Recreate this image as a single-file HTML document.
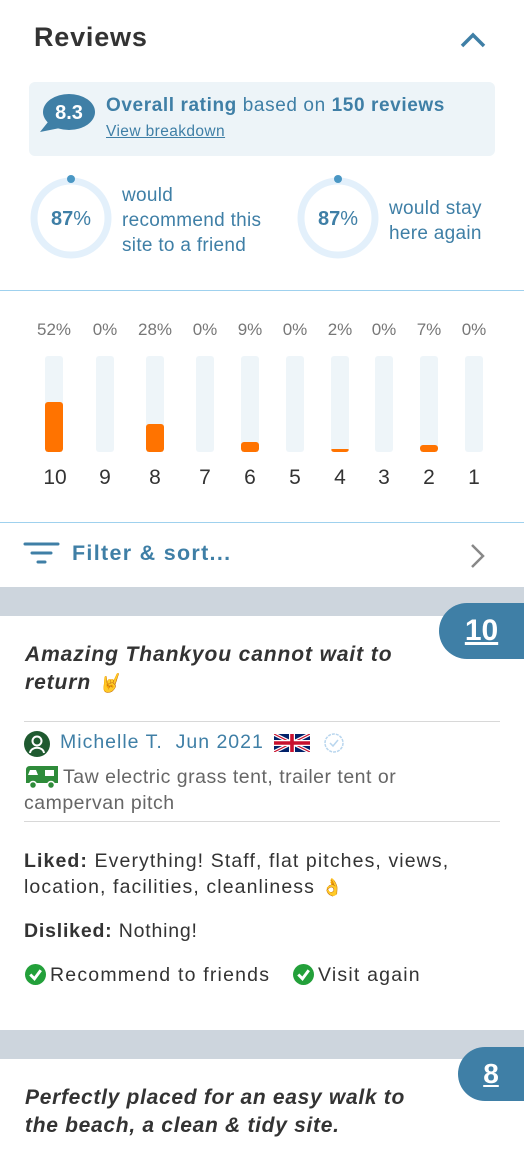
<!DOCTYPE html>
<html><head><meta charset="utf-8">
<style>
*{margin:0;padding:0;box-sizing:border-box}
body{width:524px;height:1163px;overflow:hidden;background:#fff;font-family:"Liberation Sans",sans-serif;position:relative;color:#333}
.a{position:absolute;white-space:nowrap}
.blue{color:#3f7fa6}
.track{position:absolute;top:356px;width:18px;height:96px;background:#eef5f9;border-radius:3px;overflow:hidden}
.fill{position:absolute;bottom:0;left:0;width:100%;background:#ff7300;border-radius:3px}
.pct{position:absolute;top:320px;width:50px;margin-left:-25px;text-align:center;font-size:17px;color:#777}
.num{position:absolute;top:466px;width:50px;margin-left:-25px;text-align:center;font-size:21px;color:#333}
.gray{position:absolute;left:0;width:524px;background:#cdd5dd}
.badge{position:absolute;right:0;background:#3f7fa6;color:#fff;font-weight:bold;border-radius:28px 0 0 28px;text-align:center;text-decoration:underline;font-size:30px}
.hr{position:absolute;left:24px;width:476px;height:1px;background:#d8d8d8}
</style></head><body>
<div class="a" style="left:34px;top:22px;font-size:27px;font-weight:bold;color:#333;letter-spacing:0.8px">Reviews</div>
<svg class="a" style="left:458px;top:30px" width="30" height="20" viewBox="0 0 30 20"><path d="M4 16 L15 5 L26 16" fill="none" stroke="#3f7fa6" stroke-width="3.5"/></svg>

<div class="a" style="left:29px;top:82px;width:466px;height:74px;background:#edf4f8;border-radius:6px"></div>
<svg class="a" style="left:38px;top:92px" width="58" height="42" viewBox="0 0 58 42"><ellipse cx="31" cy="20" rx="26" ry="18" fill="#3f7fa6"/><path d="M10 30 L2 40 L22 36 Z" fill="#3f7fa6"/><text x="31" y="27" text-anchor="middle" font-family="Liberation Sans" font-weight="bold" font-size="20" fill="#fff">8.3</text></svg>
<div class="a blue" style="left:106px;top:95px;font-size:19px;letter-spacing:0.6px"><b>Overall rating</b> based on <b>150 reviews</b></div>
<div class="a blue" style="left:106px;top:123px;font-size:15.5px;letter-spacing:0.4px;text-decoration:underline">View breakdown</div>

<svg class="a" style="left:29px;top:174px" width="84" height="86" viewBox="0 0 84 86"><circle cx="42" cy="44" r="37" fill="none" stroke="#e3f0fb" stroke-width="7"/><circle cx="42" cy="5" r="4" fill="#4a97c4"/><text x="42" y="51" text-anchor="middle" font-family="Liberation Sans" font-weight="bold" font-size="20" fill="#3f7fa6">87<tspan font-weight="normal">%</tspan></text></svg>
<div class="a blue" style="left:122px;top:183px;font-size:19px;line-height:25px;letter-spacing:0.3px">would<br>recommend this<br>site to a friend</div>
<svg class="a" style="left:296px;top:174px" width="84" height="86" viewBox="0 0 84 86"><circle cx="42" cy="44" r="37" fill="none" stroke="#e3f0fb" stroke-width="7"/><circle cx="42" cy="5" r="4" fill="#4a97c4"/><text x="42" y="51" text-anchor="middle" font-family="Liberation Sans" font-weight="bold" font-size="20" fill="#3f7fa6">87<tspan font-weight="normal">%</tspan></text></svg>
<div class="a blue" style="left:389px;top:196px;font-size:19px;line-height:25px;letter-spacing:0.3px">would stay<br>here again</div>

<div class="a" style="left:0;top:290px;width:524px;height:1px;background:#9fd1ee"></div>

<div class="pct" style="left:54px">52%</div><div class="pct" style="left:105px">0%</div><div class="pct" style="left:155px">28%</div><div class="pct" style="left:205px">0%</div><div class="pct" style="left:250px">9%</div><div class="pct" style="left:295px">0%</div><div class="pct" style="left:340px">2%</div><div class="pct" style="left:384px">0%</div><div class="pct" style="left:429px">7%</div><div class="pct" style="left:474px">0%</div>
<div class="track" style="left:45px"><div class="fill" style="height:50px"></div></div>
<div class="track" style="left:96px"></div>
<div class="track" style="left:146px"><div class="fill" style="height:28px"></div></div>
<div class="track" style="left:196px"></div>
<div class="track" style="left:241px"><div class="fill" style="height:10px"></div></div>
<div class="track" style="left:286px"></div>
<div class="track" style="left:331px"><div class="fill" style="height:3px"></div></div>
<div class="track" style="left:375px"></div>
<div class="track" style="left:420px"><div class="fill" style="height:7px"></div></div>
<div class="track" style="left:465px"></div>
<div class="num" style="left:55px">10</div><div class="num" style="left:105px">9</div><div class="num" style="left:155px">8</div><div class="num" style="left:205px">7</div><div class="num" style="left:250px">6</div><div class="num" style="left:295px">5</div><div class="num" style="left:340px">4</div><div class="num" style="left:384px">3</div><div class="num" style="left:429px">2</div><div class="num" style="left:474px">1</div>

<div class="a" style="left:0;top:522px;width:524px;height:1px;background:#9fd1ee"></div>
<svg class="a" style="left:23px;top:541px" width="38" height="26" viewBox="0 0 38 26"><g stroke="#3f7fa6" stroke-width="3" stroke-linecap="round"><line x1="2" y1="3" x2="35" y2="3"/><line x1="9" y1="12" x2="28" y2="12"/><line x1="15" y1="21" x2="22" y2="21"/></g></svg>
<div class="a" style="left:72px;top:541px;font-size:21.5px;font-weight:bold;color:#3f7fa6;letter-spacing:1.3px">Filter &amp; sort...</div>
<svg class="a" style="left:468px;top:542px" width="20" height="28" viewBox="0 0 20 28"><path d="M4 3 L15 14 L4 25" fill="none" stroke="#888" stroke-width="2.5"/></svg>

<div class="gray" style="top:587px;height:29px"></div>
<div class="badge" style="top:603px;width:85px;height:56px;line-height:56px">10</div>
<div class="a" style="left:25px;top:641px;font-size:21px;font-weight:bold;font-style:italic;line-height:28px;color:#333;letter-spacing:0.9px">Amazing Thankyou cannot wait to<br>return <span style="font-size:18px">🤘</span></div>
<div class="hr" style="top:721px"></div>
<svg class="a" style="left:24px;top:731px" width="26" height="26" viewBox="0 0 26 26"><circle cx="13" cy="13" r="13" fill="#1f5a30"/><circle cx="13" cy="10" r="4.5" fill="none" stroke="#fff" stroke-width="2"/><path d="M6 22 C7 15 19 15 20 22" fill="none" stroke="#fff" stroke-width="2"/></svg>
<div class="a" style="left:60px;top:731px;font-size:19.5px;color:#3f7fa6;letter-spacing:1px">Michelle T.&nbsp; Jun 2021</div>
<svg class="a" style="left:274px;top:734px" width="36" height="18" viewBox="0 0 60 30"><rect width="60" height="30" fill="#012169"/><path d="M0 0L60 30M60 0L0 30" stroke="#fff" stroke-width="6"/><path d="M0 0L60 30M60 0L0 30" stroke="#C8102E" stroke-width="2"/><path d="M30 0V30M0 15H60" stroke="#fff" stroke-width="10"/><path d="M30 0V30M0 15H60" stroke="#C8102E" stroke-width="6"/></svg>
<svg class="a" style="left:322px;top:731px" width="24" height="24" viewBox="0 0 24 24"><circle cx="12" cy="12" r="9" fill="none" stroke="#b9d6ee" stroke-width="1.5" stroke-dasharray="3 1"/><path d="M8 12 L11 15 L16 9" fill="none" stroke="#b9d6ee" stroke-width="1.5"/></svg>
<svg class="a" style="left:24px;top:764px" width="36" height="26" viewBox="0 0 36 26"><path d="M2 6 Q2 2 6 2 H34 V19 H2 Z" fill="#2e8b3a"/><rect x="21" y="6" width="9" height="6" fill="#fff"/><path d="M4 11 H14 L12 6 H6 Z" fill="#fff"/><circle cx="9" cy="21" r="3.5" fill="#2e8b3a" stroke="#fff" stroke-width="1.5"/><circle cx="27" cy="21" r="3.5" fill="#2e8b3a" stroke="#fff" stroke-width="1.5"/></svg>
<div class="a" style="left:63px;top:764px;font-size:19.5px;color:#666;line-height:26px;letter-spacing:0.5px">Taw electric grass tent, trailer tent or</div>
<div class="a" style="left:24px;top:790px;font-size:19.5px;color:#666;line-height:26px;letter-spacing:0.5px">campervan pitch</div>
<div class="hr" style="top:821px"></div>

<div class="a" style="left:24px;top:848px;font-size:19.5px;line-height:26px;color:#333;letter-spacing:1.1px"><b>Liked:</b> Everything! Staff, flat pitches, views,<br>location, facilities, cleanliness <span style="font-size:17px">👌</span></div>
<div class="a" style="left:24px;top:920px;font-size:19.5px;color:#333;letter-spacing:0.8px"><b>Disliked:</b> Nothing!</div>
<svg class="a" style="left:25px;top:964px" width="21" height="21" viewBox="0 0 20 20"><circle cx="10" cy="10" r="10" fill="#23a03a"/><path d="M5 10 L9 14 L15 6" fill="none" stroke="#fff" stroke-width="2.8"/></svg>
<div class="a" style="left:50px;top:964px;font-size:19.5px;color:#333;letter-spacing:1.2px">Recommend to friends</div>
<svg class="a" style="left:293px;top:964px" width="21" height="21" viewBox="0 0 20 20"><circle cx="10" cy="10" r="10" fill="#23a03a"/><path d="M5 10 L9 14 L15 6" fill="none" stroke="#fff" stroke-width="2.8"/></svg>
<div class="a" style="left:318px;top:964px;font-size:19.5px;color:#333;letter-spacing:1.2px">Visit again</div>

<div class="gray" style="top:1030px;height:29px"></div>
<div class="badge" style="top:1047px;width:66px;height:54px;line-height:54px;font-size:28px">8</div>
<div class="a" style="left:25px;top:1084px;font-size:21px;font-weight:bold;font-style:italic;line-height:28px;color:#333;letter-spacing:0.7px">Perfectly placed for an easy walk to<br>the beach, a clean &amp; tidy site.</div>
</body></html>
